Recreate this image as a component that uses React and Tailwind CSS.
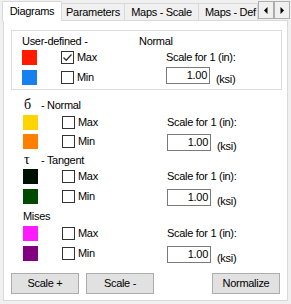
import React from "react";

const font = { fontFamily: '"Liberation Sans", Arial, sans-serif' };

const Check = ({ checked }) => (
  <span className="mt-[1px] flex h-[13px] w-[13px] items-center justify-center border border-[#333333] bg-white">
    {checked && (
      <svg width="11" height="11" viewBox="0 0 11 11">
        <path d="M1.5 5.5 L4.2 8.2 L9.5 2.5" fill="none" stroke="#333333" strokeWidth="1.3" />
      </svg>
    )}
  </span>
);

const Swatch = ({ color }) => <span className={`h-[15px] w-[15px] shrink-0 ${color}`} />;

const ScaleInput = ({ className = "" }) => (
  <div className={`flex items-start ${className}`}>
    <div className="flex h-[17px] w-[44px] items-center justify-end border border-[#7a7a7a] bg-white pr-[2px] leading-[15px]">
      1.00
    </div>
    <span className="ml-[6px] mt-[5px] leading-[15px]">(ksi)</span>
  </div>
);

// one colour row: swatch, checkbox, label, then the right-hand part
const Row = ({ color, checked, label, children, className = "" }) => (
  <div className={`flex h-[15px] items-start ${className}`}>
    <div className="flex w-[144px] items-start">
      <Swatch color={color} />
      <span className="ml-[24px]">
        <Check checked={checked} />
      </span>
      <span className="ml-[3px] leading-[15px]">{label}</span>
    </div>
    {children}
  </div>
);

const Section = ({ glyph, title, max, min, className = "", rowTop = "mt-[2px]", rowGap = "mt-[4px]" }) => (
  <div className={`pl-[19px] ${className}`}>
    <div className="flex h-[16px] items-center leading-[16px]">
      {glyph && (
        <span className="w-[18px] pl-[1px] text-[14px] leading-[16px]" style={{ fontFamily: '"Liberation Serif", serif' }}>
          {glyph}
        </span>
      )}
      <span>{title}</span>
    </div>
    <Row color={max} label="Max" className={rowTop}>
      <span className="leading-[15px]">Scale for 1 (in):</span>
    </Row>
    <Row color={min} label="Min" className={rowGap}>
      <ScaleInput />
    </Row>
  </div>
);

const Tab = ({ children, className = "" }) => (
  <div className={`mt-[3px] flex h-[17px] shrink-0 items-center justify-center border-r border-t border-[#d9d9d9] bg-[#f0f0f0] whitespace-nowrap ${className}`}>
    {children}
  </div>
);

const Arrow = ({ dir }) => (
  <div className="flex h-[18px] w-[16px] items-center justify-center border border-[#adadad] bg-[#f0f0f0]">
    <svg width="4" height="7" viewBox="0 0 4 7">
      {dir === "left" ? <path d="M3.5 0 L0 3.5 L3.5 7 Z" fill="#000" /> : <path d="M0.5 0 L4 3.5 L0.5 7 Z" fill="#000" />}
    </svg>
  </div>
);

const Button = ({ children, className = "" }) => (
  <div className={`flex h-[21px] w-[68px] items-center justify-center border border-[#adadad] bg-[#e1e1e1] ${className}`}>
    {children}
  </div>
);

export default function App() {
  return (
    <div className="h-[304px] w-[291px] overflow-hidden bg-[#f0f0f0] text-[11px] tracking-[-0.3px] text-black" style={font}>
      {/* tab strip */}
      <div className="flex h-[20px] items-start">
        <div className="relative z-10 ml-[2px] mt-[1px] flex h-[20px] w-[60px] shrink-0 items-center justify-center border-l border-r border-t border-[#d9d9d9] bg-white pb-[1px]">
          Diagrams
        </div>
        <Tab className="w-[63px]">Parameters</Tab>
        <Tab className="w-[74px]">Maps - Scale</Tab>
        <Tab className="w-[59px] justify-start pl-[6px]">Maps - Def</Tab>
        <div className="mt-[1px] flex">
          <Arrow dir="left" />
          <Arrow dir="right" />
        </div>
      </div>

      {/* panel */}
      <div className="ml-[3px] flex h-[281px] w-[285px] flex-col border border-[#d9d9d9] bg-white">
        <div className="ml-[7px] mt-[9px] h-[60px] w-[271px] border border-[#dcdcdc] pl-[10px] pt-[2px]">
          <div className="flex h-[16px] items-center leading-[16px]">
            <span className="w-[117px]">User-defined -</span>
            <span>Normal</span>
          </div>
          <Row color="bg-[#ff1a00]" checked label="Max" className="mt-[1px]">
            <span className="leading-[15px]">Scale for 1 (in):</span>
          </Row>
          <Row color="bg-[#1580ee]" label="Min" className="mt-[5px]">
            <ScaleInput className="-mt-[3px]" />
          </Row>
        </div>

        <Section glyph="б" title="- Normal" max="bg-[#ffd400]" min="bg-[#ff7f00]" className="mt-[7px]" />
        <Section glyph="τ" title="- Tangent" max="bg-[#001000]" min="bg-[#004a00]" className="mt-[3px]" rowTop="mt-[1px]" rowGap="mt-[5px]" />
        <Section title="Mises" max="bg-[#ff1aff]" min="bg-[#800080]" className="mt-[4px]" rowGap="mt-[5px]" />

        <div className="mt-[12px] flex px-[7px]">
          <Button>Scale +</Button>
          <Button className="ml-[7px]">Scale -</Button>
          <Button className="ml-auto">Normalize</Button>
        </div>
      </div>
    </div>
  );
}
